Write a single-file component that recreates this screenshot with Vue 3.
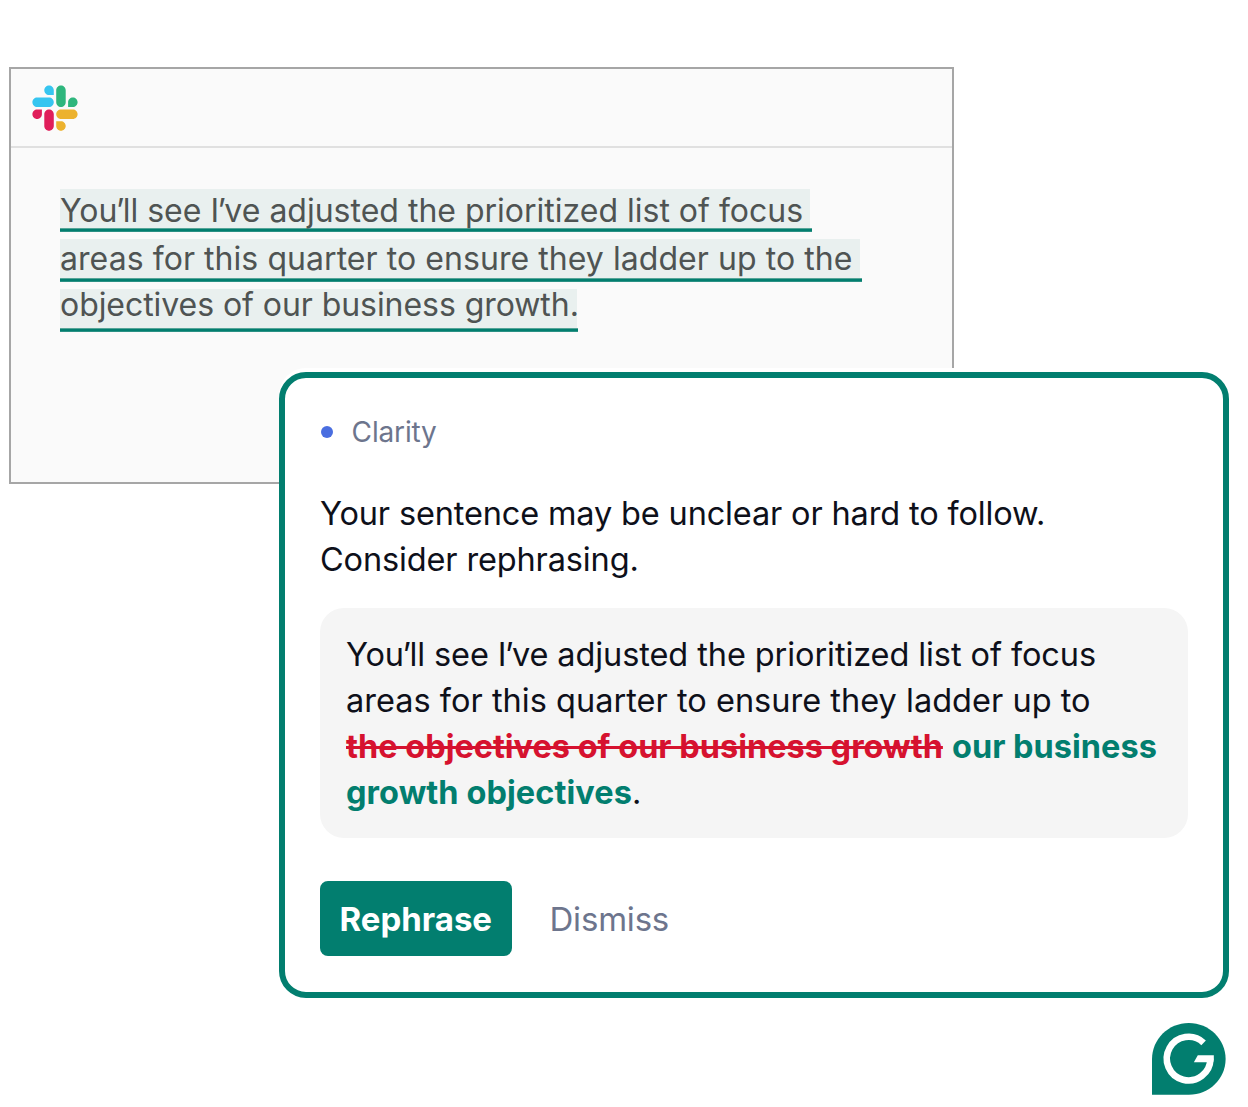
<script setup>
const draft = [
  { start: 'You', mid: 'll see I', end: 've adjusted the prioritized list of focus' },
  { start: 'areas for this quarter to ensure they ladder up to the' },
  { start: 'objectives of our business growth.' }
]
</script>

<template>
  <main class="scene">
    <section class="window">
      <header class="window-bar">
        <svg class="slack" viewBox="-1.1 -1.6 125 127.7" aria-label="Slack">
          <path fill="#e01e5a" d="M25.8 77.6c0 7.1-5.8 12.9-12.9 12.9S0 84.7 0 77.6s5.8-12.9 12.9-12.9h12.9v12.9zm6.5 0c0-7.1 5.8-12.9 12.9-12.9s12.9 5.8 12.9 12.9v32.3c0 7.1-5.8 12.9-12.9 12.9s-12.9-5.8-12.9-12.9V77.6z" />
          <path fill="#36c5f0" d="M45.2 25.8c-7.1 0-12.9-5.8-12.9-12.9S38.1 0 45.2 0s12.9 5.8 12.9 12.9v12.9H45.2zm0 6.5c7.1 0 12.9 5.8 12.9 12.9s-5.8 12.9-12.9 12.9H12.9C5.8 58.1 0 52.3 0 45.2s5.8-12.9 12.9-12.9h32.3z" />
          <path fill="#2eb67d" d="M97 45.2c0-7.1 5.8-12.9 12.9-12.9s12.9 5.8 12.9 12.9-5.8 12.9-12.9 12.9H97V45.2zm-6.5 0c0 7.1-5.8 12.9-12.9 12.9s-12.9-5.8-12.9-12.9V12.9C64.7 5.8 70.5 0 77.6 0s12.9 5.8 12.9 12.9v32.3z" />
          <path fill="#ecb22e" d="M77.6 97c7.1 0 12.9 5.8 12.9 12.9s-5.8 12.9-12.9 12.9-12.9-5.8-12.9-12.9V97h12.9zm0-6.5c-7.1 0-12.9-5.8-12.9-12.9s5.8-12.9 12.9-12.9h32.3c7.1 0 12.9 5.8 12.9 12.9s-5.8 12.9-12.9 12.9H77.6z" />
        </svg>
      </header>
      <div class="draft">
        <div v-for="(line, i) in draft" :key="i" class="line" :class="'line-' + (i + 1)">
          <template v-if="line.mid">{{ line.start }}<span class="apos">’</span>{{ line.mid }}<span class="apos">’</span>{{ line.end }}</template><template v-else>{{ line.start }}</template>
        </div>
      </div>
    </section>

    <section class="card">
      <div class="category"><i class="dot"></i><span>Clarity</span></div>
      <p class="message"><span class="m1">Your sentence may be unclear or hard to follow.</span><br /><span class="m2">Consider rephrasing.</span></p>
      <div class="suggestion">
        <span class="s1">You<span class="apos">’</span>ll see I<span class="apos">’</span>ve adjusted the prioritized list of focus</span><br />
        <span class="s2">areas for this quarter to ensure they ladder up to</span><br />
        <del>the objectives of our business growth</del> <ins>our business</ins><br />
        <ins class="s4">growth objectives</ins>.
      </div>
      <div class="actions">
        <button class="primary">Rephrase</button>
        <button class="plain">Dismiss</button>
      </div>
    </section>

    <svg class="badge" viewBox="0 0 74 73" aria-label="Grammarly">
      <path fill="#027e6f" d="M0 71.8V36.2C0 16.2 16.4 0 36.8 0S73.6 16.2 73.6 36S57.2 71.8 36.8 71.8Z" />
      <path fill="none" stroke="#fff" stroke-width="6.6" d="M51.6 19.8A21.8 21.8 0 1 0 58.4 35.8" />
      <path fill="#fff" d="M45.8 32.3H61.8V35.8L61.3 39.3H41.9Z" />
    </svg>
  </main>
</template>

<style scoped>
.scene {
  box-sizing: border-box;
  position: relative;
  width: 1248px;
  height: 1107px;
  padding: 67px 0 0 9px;
  overflow: hidden;
  background: #fff;
  font-family: Inter, 'Liberation Sans', sans-serif;
  font-weight: 400;
}

.window {
  box-sizing: border-box;
  width: 945px;
  height: 417px;
  border: 2px solid #a6a6a6;
  background: #fafafa;
}

.window-bar {
  box-sizing: border-box;
  height: 79px;
  padding: 16px 0 0 21px;
  border-bottom: 2px solid #e0e0e0;
}

.slack {
  display: block;
  width: 46px;
  height: 47px;
}

.draft {
  display: flex;
  flex-direction: column;
  align-items: flex-start;
  gap: 7px;
  padding: 41px 0 0 49px;
}

.line {
  height: 43px;
  background:
    linear-gradient(#55a598 1px, #027e6f 1px 3px, #2b9184 3px) 0 100% / 100% 4px no-repeat,
    linear-gradient(#e9f0ef, #e9f0ef) no-repeat;
  color: #4f5453;
  font-size: 32px;
  white-space: nowrap;
}

.line-1 { width: 752px; background-size: 100% 4px, 750px 100%; line-height: 44px; }
.line-2 { width: 802px; background-size: 100% 4px, 800px 100%; line-height: 40px; letter-spacing: 0.06px; }
.line-3 { width: 518px; background-size: 100% 4px, 517px 100%; line-height: 32px; letter-spacing: -0.06px; }

.apos { margin: 0 -1.5px; }

.card {
  box-sizing: border-box;
  position: absolute;
  left: 279px;
  top: 372px;
  width: 950px;
  height: 626px;
  padding: 37px 35px 0;
  border: 6px solid #027e6f;
  border-radius: 27px;
  background: #fff;
  box-shadow: 0 -4px 0 #fff;
  color: #0e101a;
}

.category {
  display: flex;
  align-items: center;
  gap: 19px;
  height: 34px;
  padding-left: 0.6px;
  color: #6d758d;
  font-size: 28px;
  line-height: 34px;
  letter-spacing: -0.15px;
}

.dot {
  width: 12px;
  height: 12px;
  border-radius: 50%;
  background: #4a6ee0;
}

.message,
.suggestion {
  font-size: 32.5px;
  line-height: 46px;
  white-space: nowrap;
}

.message { margin: 42px 0 0; }
.m1 { letter-spacing: -0.15px; }
.m2 { letter-spacing: -0.14px; }

.suggestion {
  width: 868px;
  height: 230px;
  box-sizing: border-box;
  margin-top: 25px;
  padding: 24px 26px 22px;
  border-radius: 24px;
  background: #f5f5f5;
}

.s1 { letter-spacing: -0.09px; }
.s2 { letter-spacing: 0.02px; }
.s4 { letter-spacing: 0.06px; }

del {
  color: #d6122f;
  font-weight: 700;
  letter-spacing: -0.01px;
  text-decoration-thickness: 3px;
}

ins {
  color: #027e6f;
  font-weight: 700;
  text-decoration: none;
}

.actions {
  display: flex;
  gap: 38px;
  margin-top: 43px;
}

button {
  height: 75px;
  padding: 2px 0 0;
  border: 0;
  background: none;
  font-family: inherit;
  font-size: 33px;
  line-height: 73px;
}

.primary {
  width: 191.5px;
  border-radius: 8px;
  background: #027e6f;
  color: #fff;
  font-weight: 700;
}

.plain {
  color: #6d758d;
  letter-spacing: -0.2px;
}

.badge {
  position: absolute;
  left: 1152px;
  top: 1022.7px;
  width: 74px;
  height: 73px;
}
</style>

<style>
body { background: #fff; }
</style>
